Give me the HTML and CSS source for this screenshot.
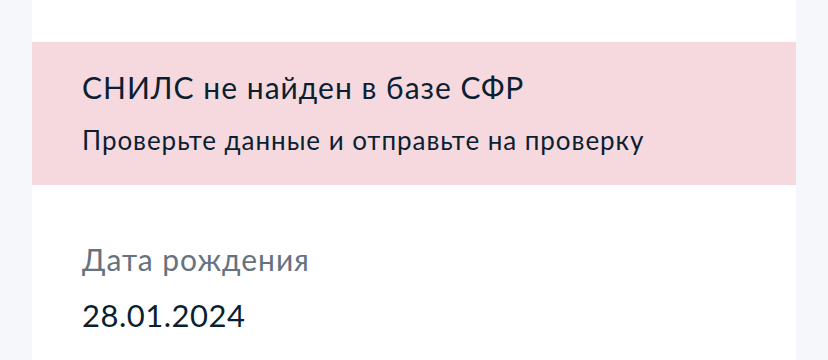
FILE: index.html
```html
<!DOCTYPE html>
<html>
<head>
<meta charset="utf-8">
<link rel="stylesheet" href="styles.css">
</head>
<body>

<div class="card">
  <div class="alert">
    <div class="alert-title">СНИЛС не найден в базе СФР</div>
    <div class="alert-text">Проверьте данные и отправьте на проверку</div>
  </div>

  <div class="field">
    <div class="field-label">Дата рождения</div>
    <div class="field-value">28.01.2024</div>
  </div>
</div>

</body>
</html>
```

FILE: styles.css
```css
body {
  margin: 0;
  background-color: #f5f7fb;
  font-family: Lato, "Noto Sans", sans-serif;
  color: #0b1f33;
}

.card {
  margin: 0 32px;
  padding-top: 42px;
  min-height: 360px;
  box-sizing: border-box;
  background-color: #fff;
}

.alert {
  padding: 27px 50px 29px;
  background-color: #f6d9de;
}

.alert-title {
  font-size: 30px;
  line-height: 36px;
  letter-spacing: 1px;
}

.alert-text {
  margin-top: 19px;
  font-size: 26px;
  line-height: 32px;
  letter-spacing: 0.95px;
}

.field {
  padding: 56px 50px 0;
}

.field-label {
  color: #66727f;
  font-size: 30px;
  line-height: 36px;
  letter-spacing: 0.95px;
}

.field-value {
  margin-top: 20px;
  font-size: 31px;
  line-height: 36px;
  letter-spacing: 0.5px;
}
```
